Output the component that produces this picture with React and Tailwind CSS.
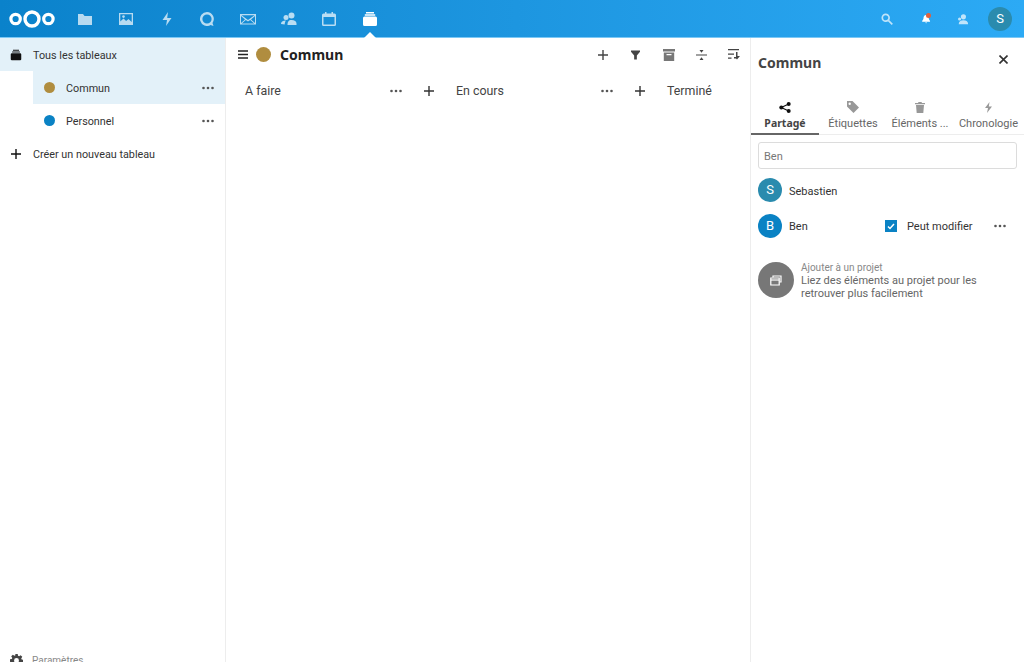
import React from "react";

const F = "font-['Roboto',sans-serif]";
const B = "font-['Noto_Sans',sans-serif] font-bold";

function Dots({ className = "" }) {
  return (
    <svg width="12" height="4" viewBox="0 0 12 4" className={className}>
      <circle cx="1.500" cy="2" r="1.300" fill="#555" />
      <circle cx="6" cy="2" r="1.300" fill="#555" />
      <circle cx="10.500" cy="2" r="1.300" fill="#555" />
    </svg>
  );
}

function Plus({ size = 10, color = "#333", w = 1.4 }) {
  return (
    <svg width={size} height={size} viewBox="0 0 10 10">
      <path d="M5 0V10M0 5H10" stroke={color} strokeWidth={w} />
    </svg>
  );
}

function DeckIcon({ color = "#fff", size = 16 }) {
  return (
    <svg width={size} height={size} viewBox="0 0 16 16" fill={color}>
      <path d="M4 1h8v1.400H4zM2.800 3.300h10.400v1.400H2.800z" />
      <path d="M2.500 5.600h11A1.500 1.500 0 0 1 15 7.100v6.400a1.500 1.500 0 0 1-1.500 1.500h-11A1.500 1.500 0 0 1 1 13.500V7.100a1.500 1.500 0 0 1 1.500-1.500z" />
    </svg>
  );
}

function NavIcon({ children }) {
  return (
    <div className="w-[40.7px] h-full flex items-center justify-center opacity-70">
      <svg width="16" height="16" viewBox="0 0 16 16" fill="#fff">
        {children}
      </svg>
    </div>
  );
}

function SideRow({ dot, label, active }) {
  return (
    <div className={`ml-[33px] h-[33px] flex items-center ${active ? "bg-[#e3f1f9]" : ""}`}>
      <span className={`w-[11px] h-[11px] rounded-full ml-[11px] ${dot}`} />
      <span className="ml-[11px] pt-[4px] text-[10.8px] text-[#333] flex-1">{label}</span>
      <Dots className="mr-[11px]" />
    </div>
  );
}

function ListHead({ title, last }) {
  return (
    <div className="w-[211px] shrink-0 flex items-center">
      <span className="text-[12.4px] text-[#444] flex-1 whitespace-nowrap">{title}</span>
      {!last && (
        <>
          <Dots />
          <span className="ml-[22px] mr-[22px] flex"><Plus /></span>
        </>
      )}
    </div>
  );
}

function Tab({ icon, label, active, w }) {
  return (
    <div className={`flex flex-col items-center shrink-0 h-[36px] pt-[1px] ${w} ${active ? "border-b-2 border-[#666]" : "border-b-2 border-transparent"}`}>
      <div className={`h-[14px] flex items-center ${active ? "" : "opacity-60"}`}>{icon}</div>
      <span className={`leading-[15px] mt-[2px] whitespace-nowrap ${active ? `${B} text-[10.5px] text-[#444]` : "text-[11px] text-[#666]"}`}>{label}</span>
    </div>
  );
}

export default function App() {
  return (
    <div className={`${F} w-[1024px] h-[662px] overflow-hidden flex flex-col bg-white`}>
      <header className="h-[38px] shrink-0 flex items-center bg-gradient-to-r from-[#0a82cb] to-[#2caaf5] border-b border-[#7cc8f5] relative">
        <div className="w-[65px] flex justify-center pr-[1px]">
          <svg width="46" height="20" viewBox="0 0 46 20" fill="none" stroke="#fff">
            <circle cx="23" cy="10" r="7" strokeWidth="3.400" />
            <circle cx="6.600" cy="10" r="4.700" strokeWidth="3.200" />
            <circle cx="39.400" cy="10" r="4.700" strokeWidth="3.200" />
          </svg>
        </div>
        <div className="flex h-full">
          <NavIcon><path d="M1 3h5l1.500 2H15v9H1z" /></NavIcon>
          <NavIcon>
            <path fillRule="evenodd" d="M1 2h14v12H1zM2.300 3.300v7.200l3.200-3 2.600 2.400 2.400-2 3.200 3V3.300z" />
            <circle cx="5.500" cy="5.600" r="1.300" />
          </NavIcon>
          <NavIcon><path d="M9 1 3.500 9H8l-1 6 5.500-8H8.200z" /></NavIcon>
          <NavIcon>
            <path fillRule="evenodd" d="M8 1a7 7 0 1 0 3.600 13l2.900 1-1-3A7 7 0 0 0 8 1zm0 2.400a4.600 4.600 0 1 1 0 9.200 4.600 4.600 0 0 1 0-9.200z" />
          </NavIcon>
          <NavIcon>
            <path fillRule="evenodd" d="M0 3h16v10.500H0zM1.500 4.200 8 9l6.500-4.800zM1 5v7l4-3.600zm14 0-4 3.400 4 3.600zM5.800 9 1.800 12.500h12.400L10.200 9 8 10.600z" />
          </NavIcon>
          <NavIcon>
            <circle cx="10.500" cy="4.500" r="3" />
            <circle cx="5" cy="6.500" r="2.500" />
            <path d="M6.500 14c0-3 1-5 4-5s5 1.500 5 3.500V14zM0 13c0-2 1.500-3.500 5-3.500-.8 1-1.300 2.500-1.300 4z" />
          </NavIcon>
          <NavIcon>
            <path fillRule="evenodd" d="M2.500 2.500H4V1h1.500v1.500h5V1H12v1.500h1.500A1.500 1.500 0 0 1 15 4v9.500a1.500 1.500 0 0 1-1.500 1.500h-11A1.500 1.500 0 0 1 1 13.500V4a1.500 1.500 0 0 1 1.500-1.500zm0 3.500v7.500h11V6z" />
          </NavIcon>
          <div className="w-[40.7px] h-full flex items-center justify-center relative">
            <DeckIcon />
            <span className="absolute bottom-[-1px] left-1/2 -translate-x-1/2 w-0 h-0 border-x-[6px] border-x-transparent border-b-[6px] border-b-white" />
          </div>
        </div>
        <div className="flex-1" />
        <div className="flex items-center h-full">
          <div className="w-[38px] flex justify-center opacity-70">
            <svg width="12" height="12" viewBox="0 0 12 12" fill="none" stroke="#fff" strokeWidth="1.700">
              <circle cx="4.700" cy="4.700" r="3.400" />
              <path d="M7.300 7.300 11.300 11.300" />
            </svg>
          </div>
          <div className="w-[40px] flex justify-center relative">
            <svg width="11" height="11" viewBox="0 0 13 14" fill="#fff">
              <path d="M6 2.500c-2.300 0-3.300 1.700-3.300 4 0 1.500-.8 2.600-1.700 3.500v1h10V10c-.9-.9-1.700-2-1.700-3.500 0-2.300-1-4-3.300-4zM4.800 12a1.300 1.300 0 0 0 2.500 0z" />
            </svg>
            <span className="absolute top-0 left-[20px] w-[5px] h-[5px] rounded-full bg-[#e2603a]" />
          </div>
          <div className="w-[34px] flex justify-center opacity-70">
            <svg width="12" height="12" viewBox="0 0 14 14" fill="#fff">
              <circle cx="7.500" cy="4.500" r="3" />
              <path d="M2 13c0-3 2-4.500 5.500-4.500S13 10 13 13z" />
              <circle cx="3" cy="7" r="1.800" />
            </svg>
          </div>
          <div className="w-[24px] h-[24px] rounded-full bg-[#2a8bae] text-white text-[13px] flex items-center justify-center ml-[8px] mr-[12px]">S</div>
        </div>
      </header>

      <div className="flex-1 flex min-h-0">
        <aside className="w-[226px] shrink-0 border-r border-[#ededed] flex flex-col relative">
          <div className="h-[33px] flex items-center bg-[#e3f1f9]">
            <div className="w-[33px] flex justify-center pr-[1px]"><DeckIcon color="#111" size={12} /></div>
            <span className="pt-[4px] text-[10.8px] text-[#333]">Tous les tableaux</span>
          </div>
          <SideRow dot="bg-[#b08d3f]" label="Commun" active />
          <SideRow dot="bg-[#0a82c4]" label="Personnel" />
          <div className="h-[33px] flex items-center">
            <div className="w-[33px] flex justify-center pr-[1px]"><Plus size={10} color="#111" /></div>
            <span className="pt-[4px] text-[10.8px] text-[#333]">Créer un nouveau tableau</span>
          </div>
          <div className="flex-1" />
          <div className="h-[8px] flex items-start overflow-visible">
            <svg width="13" height="13" viewBox="0 0 16 16" fill="#444" className="ml-[10px] shrink-0">
              <path fillRule="evenodd" d="M6.500 0h3l.4 2.200 1.300.6L13.100 1.500l2 2-1.300 1.900.6 1.300 2.200.4v3l-2.200.4-.6 1.300 1.300 1.900-2 2-1.900-1.300-1.300.6-.4 2.200h-3l-.4-2.200-1.300-.6-1.900 1.300-2-2 1.300-1.900-.6-1.300L0 9.500v-3l2.200-.4.6-1.300L1.500 2.900l2-2 1.900 1.300 1.300-.6zM8 5a3 3 0 1 0 0 6 3 3 0 0 0 0-6z" />
            </svg>
            <span className="ml-[9px] text-[10px] leading-[14px] text-[#888]">Paramètres</span>
          </div>
        </aside>

        <main className="flex-1 min-w-0 flex flex-col">
          <div className="h-[33px] flex items-center shrink-0">
            <svg width="10" height="9" viewBox="0 0 10 9" className="ml-[12px]">
              <path d="M0 1H10M0 4.500H10M0 8H10" stroke="#222" strokeWidth="1.300" />
            </svg>
            <span className="ml-[8px] w-[15px] h-[15px] rounded-full bg-[#b08d3f]" />
            <span className={`ml-[9px] text-[14px] text-[#222] ${B}`}>Commun</span>
            <div className="flex-1" />
            <div className="flex items-center">
              <div className="w-[33px] flex justify-center"><Plus color="#444" /></div>
              <div className="w-[33px] flex justify-center">
                <svg width="9" height="10" viewBox="0 0 10 10" fill="#444"><path d="M0 0h10v1.500L6.500 5.500V10h-3V5.500L0 1.500z" /></svg>
              </div>
              <div className="w-[33px] flex justify-center">
                <svg width="12" height="12" viewBox="0 0 12 12" fill="#777"><path fillRule="evenodd" d="M0 0h12v2.500H0zM.8 3.500h10.400V12H.8zM3.500 5v1.200h5V5z" /></svg>
              </div>
              <div className="w-[33px] flex justify-center">
                <svg width="11" height="10" viewBox="0 0 11 10" fill="#444"><path d="M0 4.400h11v1.200H0zM3.500 0h4L5.500 2.800zM3.500 10h4L5.500 7.200z" /></svg>
              </div>
              <div className="w-[32px] flex justify-center">
                <svg width="12" height="11" viewBox="0 0 12 11" fill="#444"><path d="M0 0h11v1.200H0zM0 4.500h6v1.200H0zM0 8.500h3.500v1.200H0zM8 3h1.500v4H12l-3 3.500-1-1H6V8h2z" /></svg>
              </div>
            </div>
          </div>
          <div className="flex mt-[6px] pl-[19px] h-[28px] items-center shrink-0">
            <ListHead title="A faire" />
            <ListHead title="En cours" />
            <ListHead title="Terminé" last />
          </div>
        </main>

        <aside className="w-[274px] shrink-0 border-l border-[#ededed] flex flex-col px-[7px]">
          <div className="flex items-start h-[61px] shrink-0">
            <span className={`mt-[14px] text-[14px] text-[#444] flex-1 ${B}`}>Commun</span>
            <svg width="9" height="9" viewBox="0 0 9 9" className="mt-[17px] mr-[9px]">
              <path d="M.5.500l8 8M8.500.500l-8 8" stroke="#333" strokeWidth="1.600" />
            </svg>
          </div>
          <div className="flex -mx-[7px] border-b border-[#ededed] shrink-0 h-[36px]">
            <Tab
              w="w-[68px]"
              active
              label="Partagé"
              icon={<svg width="12" height="11" viewBox="0 0 12 11" fill="#111"><circle cx="2.300" cy="5.500" r="2" /><circle cx="9.700" cy="2" r="2" /><circle cx="9.700" cy="9" r="2" /><path d="M2.300 5.500 9.700 2M2.300 5.500 9.700 9" stroke="#111" strokeWidth="1.200" /></svg>}
            />
            <Tab
              w="w-[68px]"
              label="Étiquettes"
              icon={<svg width="12" height="12" viewBox="0 0 12 12" fill="#555"><path fillRule="evenodd" d="M0 0h5.500L12 6.500 6.500 12 0 5.500zM2.700 1.500a1.200 1.200 0 1 0 0 2.400 1.200 1.200 0 0 0 0-2.400z" /></svg>}
            />
            <Tab
              w="w-[66px]"
              label="Éléments ..."
              icon={<svg width="10" height="11" viewBox="0 0 10 11" fill="#555"><path d="M3.500 0h3l.5 1h3v1.300H0V1h3zM1 3h8l-.7 8H1.700z" /></svg>}
            />
            <Tab
              w="w-[71px]"
              label="Chronologie"
              icon={<svg width="9" height="11" viewBox="0 0 9 11" fill="#555"><path d="M5.500 0 1 6h3l-1 5 5-6.500H4.800z" /></svg>}
            />
          </div>
          <div className="mt-[7px] h-[27px] w-[259px] border border-[#dcdcdc] rounded-[3px] flex items-center pt-[3px] px-[5px] text-[11px] text-[#777] shrink-0">Ben</div>
          <div className="mt-[9px] flex items-center h-[24px] shrink-0">
            <span className="w-[24px] h-[24px] rounded-full bg-[#2a8bae] text-white text-[13px] flex items-center justify-center">S</span>
            <span className="ml-[7px] pt-[4px] text-[11px] text-[#333]">Sebastien</span>
          </div>
          <div className="mt-[12px] flex items-center h-[24px] shrink-0">
            <span className="w-[24px] h-[24px] rounded-full bg-[#0a82c4] text-white text-[13px] flex items-center justify-center">B</span>
            <span className="ml-[7px] pt-[2px] text-[11px] text-[#333] w-[96px]">Ben</span>
            <span className="w-[12px] h-[12px] bg-[#0a82c4] flex items-center justify-center">
              <svg width="8" height="7" viewBox="0 0 8 7" fill="none"><path d="M1 3.500 3 5.500 7 1" stroke="#fff" strokeWidth="1.500" /></svg>
            </span>
            <span className="ml-[10px] pt-[2px] text-[11px] text-[#333] w-[87px] whitespace-nowrap">Peut modifier</span>
            <Dots />
          </div>
          <div className="mt-[24px] flex shrink-0">
            <span className="w-[36px] h-[36px] rounded-full bg-[#777] flex items-center justify-center shrink-0">
              <svg width="12" height="11" viewBox="0 0 12 11" fill="none" stroke="#fff" strokeWidth="1.200"><path d="M3 2.500V1h8v6H9.500" /><path d="M.8 3h8.400v7H.8z" /><path d="M.8 5h8.400" /></svg>
            </span>
            <div className="ml-[7px] -mt-[1px]">
              <div className="text-[10px] leading-[13px] text-[#888]">Ajouter à un projet</div>
              <div className="text-[11px] leading-[13px] text-[#666] w-[190px]">Liez des éléments au projet pour les retrouver plus facilement</div>
            </div>
          </div>
        </aside>
      </div>
    </div>
  );
}
